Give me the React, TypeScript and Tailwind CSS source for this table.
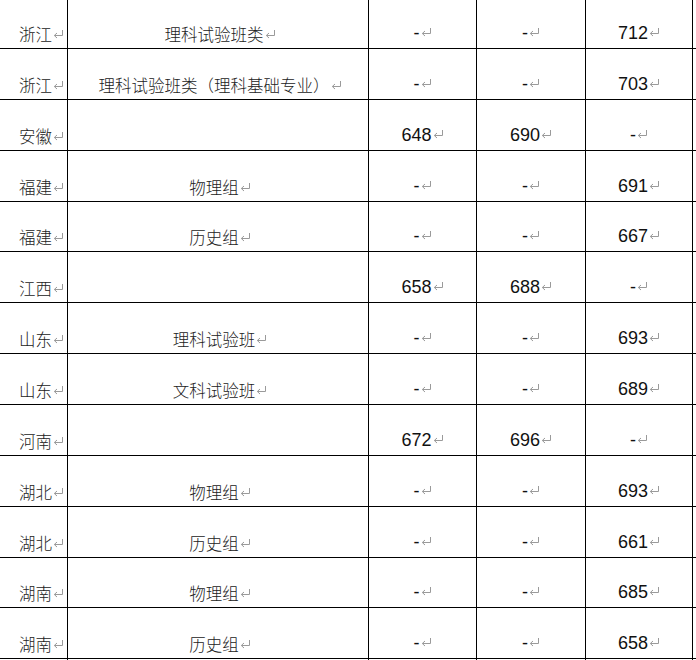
type Row = {
  province: string;
  major: string | null;
  a: string;
  b: string;
  c: string;
  h: string;
};

// row heights follow the line positions of the picture (~50.8px apart)
const rows: Row[] = [
  { province: "浙江", major: "理科试验班类", a: "-", b: "-", c: "712", h: "h-[49px]" },
  { province: "浙江", major: "理科试验班类（理科基础专业）", a: "-", b: "-", c: "703", h: "h-[51px]" },
  { province: "安徽", major: null, a: "648", b: "690", c: "-", h: "h-[51px]" },
  { province: "福建", major: "物理组", a: "-", b: "-", c: "691", h: "h-[51px]" },
  { province: "福建", major: "历史组", a: "-", b: "-", c: "667", h: "h-[50px]" },
  { province: "江西", major: null, a: "658", b: "688", c: "-", h: "h-[51px]" },
  { province: "山东", major: "理科试验班", a: "-", b: "-", c: "693", h: "h-[51px]" },
  { province: "山东", major: "文科试验班", a: "-", b: "-", c: "689", h: "h-[51px]" },
  { province: "河南", major: null, a: "672", b: "696", c: "-", h: "h-[51px]" },
  { province: "湖北", major: "物理组", a: "-", b: "-", c: "693", h: "h-[51px]" },
  { province: "湖北", major: "历史组", a: "-", b: "-", c: "661", h: "h-[51px]" },
  { province: "湖南", major: "物理组", a: "-", b: "-", c: "685", h: "h-[50px]" },
  { province: "湖南", major: "历史组", a: "-", b: "-", c: "658", h: "h-[51px]" },
];

// paragraph mark shown after each cell's text
function Mark() {
  return (
    <svg
      viewBox="0 0 11 9"
      className="inline-block w-[11px] h-[9px] ml-[1px] align-[2px]"
      fill="none"
      stroke="#9a9a9a"
      strokeWidth="1"
    >
      <path d="M9.5 0 V5.5 H1.5" />
      <path d="M4 3 L1.3 5.5 L4 8" />
    </svg>
  );
}

function Num({ value }: { value: string }) {
  return (
    <span className="text-[18px] leading-none font-normal text-[#111] font-['Liberation_Sans',Arial,sans-serif]">
      {value}
      <Mark />
    </span>
  );
}

export default function App() {
  return (
    <div className="h-[660px] w-[696px] overflow-hidden bg-white text-[#222] font-light font-['Noto_Sans_CJK_SC',sans-serif]">
      {rows.map((r, i) => (
        <div
          key={i}
          className={`grid grid-cols-[68px_301px_108px_109px_107px] border-b border-black ${r.h}`}
        >
          <div className="flex items-end pl-[19px] pb-[6px] border-r border-black text-[16.5px] leading-none">
            <span>
              {r.province}
              <Mark />
            </span>
          </div>
          <div className="flex items-end justify-center pl-[4px] pb-[6px] border-r border-black text-[16.5px] leading-none">
            {r.major && (
              <span>
                {r.major}
                <Mark />
              </span>
            )}
          </div>
          <div className="flex items-end justify-center pb-[6px] border-r border-black">
            <Num value={r.a} />
          </div>
          <div className="flex items-end justify-center pb-[6px] border-r border-black">
            <Num value={r.b} />
          </div>
          <div className="flex items-end justify-center pb-[6px] border-r border-black">
            <Num value={r.c} />
          </div>
        </div>
      ))}
      <div className="grid grid-cols-[68px_301px_108px_109px_107px] h-[20px]">
        <div className="border-r border-black" />
        <div className="border-r border-black" />
        <div className="border-r border-black" />
        <div className="border-r border-black" />
        <div className="border-r border-black" />
      </div>
    </div>
  );
}
